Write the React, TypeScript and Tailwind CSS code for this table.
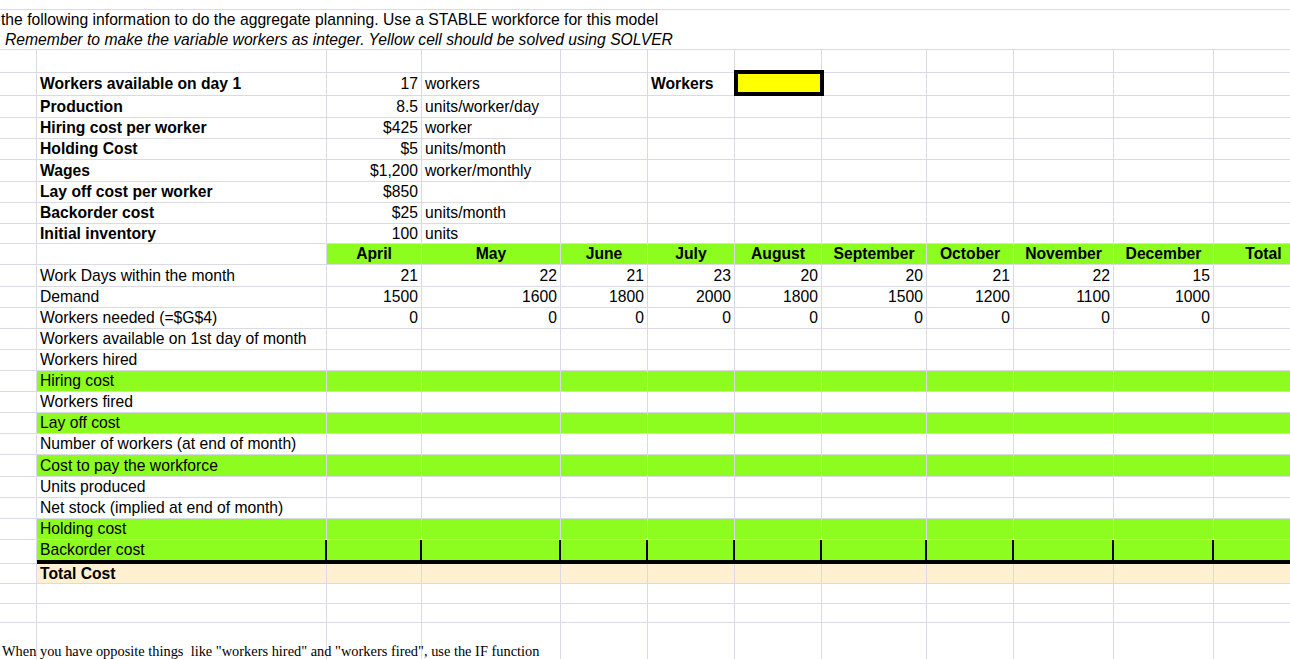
import type { ReactNode } from "react";

/**
 * Aggregate planning sheet
 * Static spreadsheet view: parameters block + monthly plan table
 */

const grid =
  "grid grid-cols-[37px_290px_95px_139px_87px_87px_87px_105px_87px_100px_100px_100px]";
const line = "border-[#dad9e7]";

type Fill = "none" | "green" | "cream";

type CellSpec = {
  v?: ReactNode;
  a?: "l" | "r" | "c";
  b?: boolean;
};

const fillClass: Record<Fill, string> = {
  none: "bg-white",
  green: "bg-[#8dfc1f]",
  cream: "bg-[#fff0d1]",
};

function Cell({
  spec,
  fill,
  heavy,
  lastCol,
}: {
  spec?: CellSpec;
  fill: Fill;
  heavy?: boolean;
  lastCol?: boolean;
}) {
  const align =
    spec?.a === "r"
      ? "justify-end pr-[3px]"
      : spec?.a === "c"
        ? "justify-center"
        : "justify-start pl-[3px]";
  const borders = heavy
    ? `${lastCol ? `border-r ${line}` : "border-r-2 border-r-black"} border-b-4 border-b-black`
    : `border-r border-b ${line}`;
  return (
    <div
      className={`flex items-center overflow-visible whitespace-nowrap ${align} ${borders} ${fillClass[fill]} ${
        spec?.b ? "font-bold" : ""
      }`}
    >
      {spec?.v}
    </div>
  );
}

function Row({
  h,
  cells = [],
  fill = "none",
  headerFill = false,
  heavy = false,
}: {
  h: string;
  cells?: (CellSpec | undefined)[];
  fill?: Fill;
  headerFill?: boolean;
  heavy?: boolean;
}) {
  return (
    <div className={`${grid} ${h}`}>
      <div className={`border-r border-b ${line} bg-white`} />
      {Array.from({ length: 11 }).map((_, i) => {
        const f: Fill = headerFill ? (i === 0 ? "none" : "green") : fill;
        return (
          <Cell
            key={i}
            spec={cells[i]}
            fill={f}
            heavy={heavy}
            lastCol={i === 10}
          />
        );
      })}
    </div>
  );
}

const L = (v: ReactNode, b = false): CellSpec => ({ v, a: "l", b });
const R = (v: ReactNode): CellSpec => ({ v, a: "r" });
const C = (v: ReactNode): CellSpec => ({ v, a: "c", b: true });

const months = [
  "April",
  "May",
  "June",
  "July",
  "August",
  "September",
  "October",
  "November",
  "December",
  "Total",
];
const workDays = ["21", "22", "21", "23", "20", "20", "21", "22", "15"];
const demand = ["1500", "1600", "1800", "2000", "1800", "1500", "1200", "1100", "1000"];

const planRows: { label: string; fill: Fill; h: string }[] = [
  { label: "Workers available on 1st day of month", fill: "none", h: "h-[21px]" },
  { label: "Workers hired", fill: "none", h: "h-[21px]" },
  { label: "Hiring cost", fill: "green", h: "h-[21px]" },
  { label: "Workers fired", fill: "none", h: "h-[21px]" },
  { label: "Lay off cost", fill: "green", h: "h-[21px]" },
  { label: "Number of workers (at end of month)", fill: "none", h: "h-[21px]" },
  { label: "Cost to pay the workforce", fill: "green", h: "h-[22px]" },
  { label: "Units produced", fill: "none", h: "h-[21px]" },
  { label: "Net stock (implied at end of month)", fill: "none", h: "h-[21px]" },
  { label: "Holding cost", fill: "green", h: "h-[21px]" },
];

export default function App() {
  return (
    <div className="w-[1290px] h-[659px] overflow-hidden bg-white text-black font-['Liberation_Sans',Arial,sans-serif] text-[15.7px] leading-[18px]">
      {/* Top strip + instructions */}
      <div className={`h-[10px] border-b ${line}`} />
      <div className={`h-[40px] border-b ${line} whitespace-nowrap leading-[20px]`}>
        <div className="pl-[1px]">
          the following information to do the aggregate planning. Use a STABLE workforce for this model
        </div>
        <div className="pl-[5px] italic">
          Remember to make the variable workers as integer. Yellow cell should be solved using SOLVER
        </div>
      </div>

      {/* Parameters */}
      <Row h="h-[23px]" />
      <Row
        h="h-[23px]"
        cells={[
          L("Workers available on day 1", true),
          R("17"),
          L("workers"),
          undefined,
          L("Workers", true),
          {
            v: (
              <div className="relative h-full w-full">
                <div className="absolute left-[-4px] top-[-3px] h-[26px] w-[90px] border-4 border-black bg-[#ffff00]" />
              </div>
            ),
            a: "l",
          },
        ]}
      />
      <Row h="h-[22px]" cells={[L("Production", true), R("8.5"), L("units/worker/day")]} />
      <Row h="h-[21px]" cells={[L("Hiring cost per worker", true), R("$425"), L("worker")]} />
      <Row h="h-[21px]" cells={[L("Holding Cost", true), R("$5"), L("units/month")]} />
      <Row h="h-[22px]" cells={[L("Wages", true), R("$1,200"), L("worker/monthly")]} />
      <Row h="h-[21px]" cells={[L("Lay off cost per worker", true), R("$850")]} />
      <Row h="h-[21px]" cells={[L("Backorder cost", true), R("$25"), L("units/month")]} />
      <Row h="h-[20px]" cells={[L("Initial inventory", true), R("100"), L("units")]} />

      {/* Monthly plan */}
      <Row h="h-[21px]" headerFill cells={[undefined, ...months.map((m) => C(m))]} />
      <Row h="h-[22px]" cells={[L("Work Days within the month"), ...workDays.map((d) => R(d))]} />
      <Row h="h-[21px]" cells={[L("Demand"), ...demand.map((d) => R(d))]} />
      <Row h="h-[21px]" cells={[L("Workers needed (=$G$4)"), ...workDays.map(() => R("0"))]} />
      {planRows.map((r) => (
        <Row key={r.label} h={r.h} fill={r.fill} cells={[L(r.label)]} />
      ))}
      <Row h="h-[24px]" fill="green" heavy cells={[L("Backorder cost")]} />
      <Row h="h-[20px]" fill="cream" cells={[L("Total Cost", true)]} />
      <Row h="h-[20px]" />
      <Row h="h-[19px]" />

      {/* Footer note */}
      <div className={`${grid} relative h-[40px]`}>
        {Array.from({ length: 12 }).map((_, i) => (
          <div key={i} className={`border-r ${line}`} />
        ))}
        <div className="absolute left-[2px] top-[19px] whitespace-nowrap font-['Liberation_Serif','Times_New_Roman',serif] text-[14.4px] leading-[18px]">
          When you have opposite things&nbsp; like "workers hired" and "workers fired", use the IF function
        </div>
      </div>
    </div>
  );
}
